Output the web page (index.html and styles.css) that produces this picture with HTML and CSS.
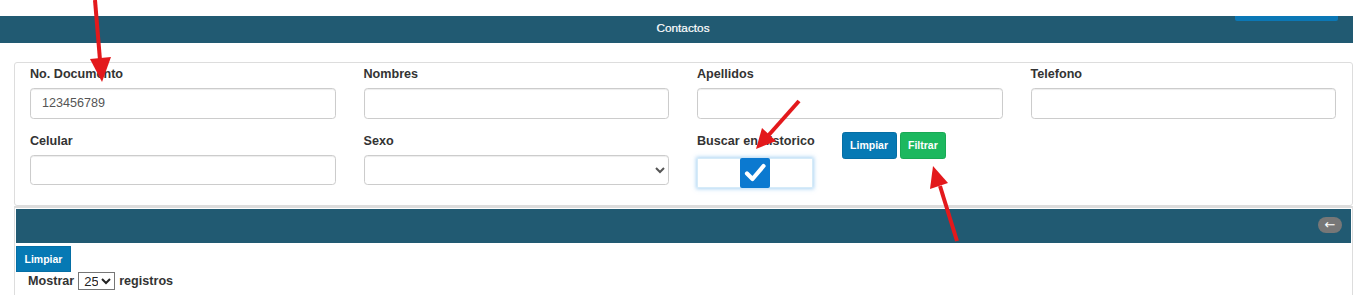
FILE: index.html
```html
<!DOCTYPE html>
<html lang="es">
<head>
<meta charset="utf-8">
<title>Contactos</title>
<link rel="stylesheet" href="styles.css">
</head>
<body>
<div class="page">
  <div class="topspace"></div>
  <div class="titlebar">
    <span class="title">Contactos</span>
    <span class="peek-btn"></span>
  </div>
  <div class="gap"></div>
  <div class="filters">
    <div class="grid">
      <div class="group">
        <label class="lbl">No. Documento</label>
        <input class="ctrl" type="text" value="123456789">
      </div>
      <div class="group">
        <label class="lbl">Nombres</label>
        <input class="ctrl" type="text">
      </div>
      <div class="group">
        <label class="lbl">Apellidos</label>
        <input class="ctrl" type="text">
      </div>
      <div class="group">
        <label class="lbl">Telefono</label>
        <input class="ctrl" type="text">
      </div>
      <div class="group">
        <label class="lbl">Celular</label>
        <input class="ctrl" type="text">
      </div>
      <div class="group">
        <label class="lbl">Sexo</label>
        <select class="ctrl sel"><option></option></select>
      </div>
      <div class="group combo">
        <div class="hist">
          <label class="lbl">Buscar en historico</label>
          <div class="toggle">
            <span class="tside"></span>
            <span class="tcheck">
              <svg width="30" height="30" viewBox="0 0 30 30"><path d="M7 15.5 L12.5 21 L23.5 8" fill="none" stroke="#fff" stroke-width="4.2" stroke-linecap="round" stroke-linejoin="round"/></svg>
            </span>
            <span class="tside"></span>
          </div>
        </div>
        <div class="actions">
          <button class="btn blue">Limpiar</button>
          <button class="btn green">Filtrar</button>
        </div>
      </div>
    </div>
  </div>
  <div class="results">
    <div class="resbar">
      <span class="pill">&#8592;</span>
    </div>
    <button class="btn blue square">Limpiar</button>
    <div class="length">Mostrar <select class="small"><option>25</option></select> registros</div>
  </div>
</div>
<svg class="annot" width="1353" height="295" viewBox="0 0 1353 295">
  <g stroke="#e3191c" stroke-width="4" fill="#e3191c" stroke-linecap="butt">
    <line x1="95" y1="0" x2="100" y2="60"/>
    <polygon points="90,59 111,57 102,82" stroke="none"/>
    <line x1="799" y1="101" x2="767" y2="137"/>
    <polygon points="776,141 762,128 756,149" stroke="none"/>
    <line x1="957" y1="241" x2="940" y2="186"/>
    <polygon points="948,183 930,189 933,166" stroke="none"/>
  </g>
</svg>
</body>
</html>
```
FILE: styles.css
```css
* { box-sizing: border-box; }
html, body { margin: 0; padding: 0; background: #fff; }
body {
  font-family: "Liberation Sans", Arial, sans-serif;
  font-size: 12.6px;
  color: #333;
  width: 1353px;
  height: 295px;
  overflow: hidden;
  position: relative;
}
.topspace { height: 16px; }
.titlebar {
  position: relative;
  height: 27px;
  background: #215a72;
  display: flex;
  justify-content: center;
  align-items: flex-start;
  padding-top: 5px;
  padding-left: 13px;
}
.title { color: #fff; font-size: 11.8px; line-height: 14px; -webkit-text-stroke: 0.2px #fff; }
.peek-btn {
  position: absolute;
  left: 1235px;
  top: 0;
  width: 103px;
  height: 5px;
  background: #0b78b6;
  border-radius: 0 0 2px 2px;
}
.gap { height: 19px; }
.filters {
  margin-left: 14px;
  width: 1339px;
  border: 1px solid #ddd;
  border-radius: 3px;
  padding: 2px 16px 4px 15px;
}
.grid {
  display: grid;
  grid-template-columns: repeat(4, 1fr);
  column-gap: 28px;
}
.group { margin-bottom: 13px; display: flex; flex-direction: column; }
.lbl {
  display: block;
  font-weight: bold;
  font-size: 12.6px;
  line-height: 18px;
  margin-bottom: 5px;
  color: #333;
}
.ctrl {
  display: block;
  width: 100%;
  height: 30.5px;
  border: 1px solid #ccc;
  border-radius: 3.6px;
  padding: 0 11px;
  font-family: "Liberation Sans", Arial, sans-serif;
  font-size: 12.6px;
  color: #555;
  background: #fff;
  box-shadow: inset 0 1px 1px rgba(0,0,0,.075);
}
.sel { padding: 0 8px; }
.combo { flex-direction: row; align-items: flex-start; }
.hist { display: flex; flex-direction: column; }
.toggle {
  display: flex;
  width: 116px;
  height: 30px;
  margin-top: 3px;
  box-shadow: 0 0 4px 1px rgba(102,175,233,.55);
  border: 1px solid #d6ebf8;
}
.tside { flex: 1; background: #fff; }
.tcheck {
  width: 30px;
  height: 30px;
  margin-top: -1px;
  background: #0b79d0;
  border-radius: 2px;
  display: flex;
}
.actions { display: flex; gap: 3px; margin-left: 27px; margin-top: 0; }
.btn {
  font-family: "Liberation Sans", Arial, sans-serif;
  font-weight: bold;
  font-size: 10.5px;
  color: #fff;
  border: 1px solid transparent;
  border-radius: 2.7px;
  height: 27px;
  padding: 0 7.5px;
  cursor: pointer;
}
.blue { background: #0679b4; border-color: #056ea4; }
.green { background: #1cb85f; border-color: #19a955; }
.results {
  margin-left: 14px;
  width: 1339px;
  border-left: 1px solid #ddd;
  border-right: 1px solid #ddd;
  border-top: 2px solid #ddd;
  padding: 1px 1px 0 1px;
  height: 90px;
}
.resbar {
  height: 34px;
  background: #215a72;
  display: flex;
  justify-content: flex-end;
  align-items: flex-start;
  padding: 8px 9px 0 0;
}
.pill {
  width: 24px;
  height: 16px;
  border-radius: 8px;
  background: #777;
  color: #fff;
  font-size: 13px;
  line-height: 16px;
  text-align: center;
  font-family: "DejaVu Sans", sans-serif;
}
.square {
  border-radius: 0;
  height: 26px;
  width: 55px;
  padding: 0;
  margin-top: 3px;
  display: block;
}
.length {
  font-weight: bold;
  font-size: 12.6px;
  line-height: 18px;
  margin-left: 12px;
  margin-top: 0;
  display: flex;
  align-items: center;
  gap: 4px;
}
.small {
  font-family: "Liberation Sans", Arial, sans-serif;
  font-size: 13px;
  height: 18px;
  width: 37px;
  border: 1px solid #767676;
  padding: 0 0 0 1px;
  border-radius: 0;
  background: #fff;
  color: #222;
}
.annot { position: absolute; left: 0; top: 0; pointer-events: none; }
```
